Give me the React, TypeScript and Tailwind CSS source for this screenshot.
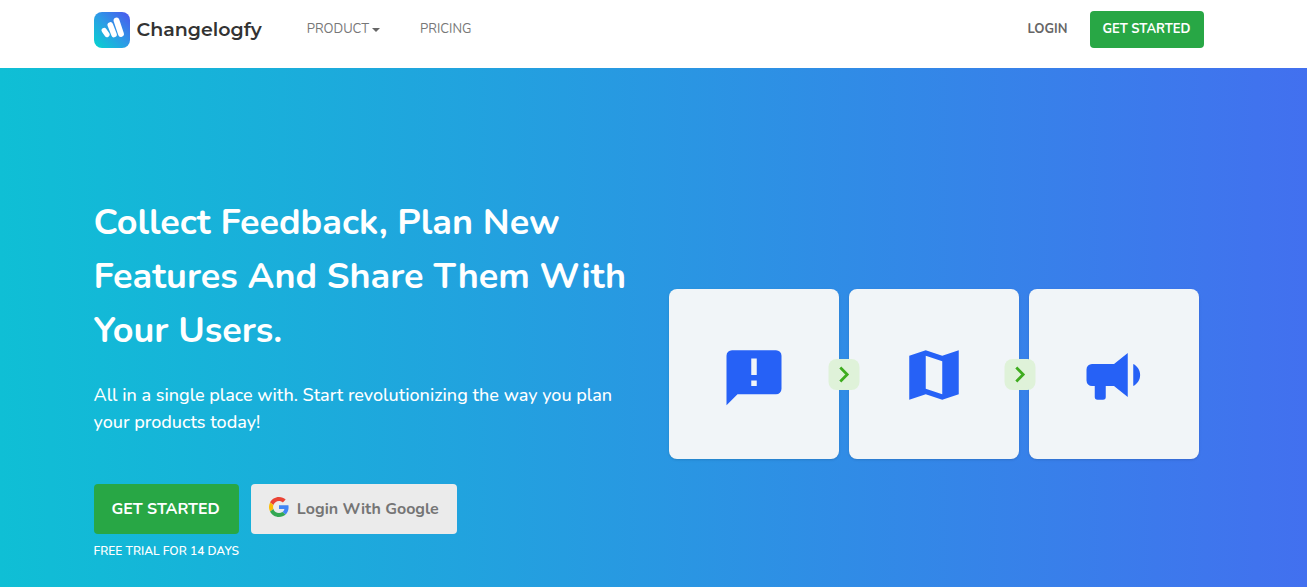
import React from 'react';

interface StepCardProps {
  label: string;
  viewBox: string;
  path: string;
}

const steps: StepCardProps[] = [
  {
    label: 'Feedback',
    viewBox: '0 -1 24 24',
    path: 'M13 11h-2V5h2v6zm0 4h-2v-2h2v2zM20 2H4a2 2 0 0 0-2 2v18l4-4h14a2 2 0 0 0 2-2V4a2 2 0 0 0-2-2z',
  },
  {
    label: 'Roadmap',
    viewBox: '0 0 24 24',
    path: 'M3 5l6-2 6 2 6-2v16l-6 2-6-2-6 2V5zm6 0v12l6 2V7L9 5z',
  },
  {
    label: 'Announcements',
    viewBox: '0 0 24 24',
    path: 'M12 8H4a2 2 0 0 0-2 2v4a2 2 0 0 0 2 2h1v4a1 1 0 0 0 1 1h2a1 1 0 0 0 1-1v-4h3l5 4V4l-5 4zm9.5 4c0 1.710-.96 3.260-2.500 4V8c1.530.75 2.500 2.300 2.500 4z',
  },
];

const StepCard = ({ label, viewBox, path }: StepCardProps) => (
  <div className="flex-1 aspect-square rounded-lg bg-[#f1f5f8] shadow-sm flex items-center justify-center pt-px">
    <svg className="w-[66px] h-[66px]" viewBox={viewBox} fill="#2661f6" fillRule="evenodd" role="img" aria-label={label}>
      <path d={path} />
    </svg>
  </div>
);

const Arrow = () => (
  <span className="w-[31px] h-[31px] rounded-lg bg-[#dff2d9] flex items-center justify-center">
    <svg className="w-[17px] h-[17px]" viewBox="0 0 16 16" fill="none" stroke="#3fac1f" strokeWidth="2.6" aria-hidden="true">
      <path d="M4.500 1.500L11 8 4.500 14.500" />
    </svg>
  </span>
);

const GoogleIcon = () => (
  <svg className="w-5 h-5 mb-1" viewBox="0 0 48 48" aria-hidden="true">
    <path fill="#EA4335" d="M24 9.5c3.540 0 6.710 1.220 9.210 3.600l6.850-6.850C35.900 2.380 30.470 0 24 0 14.620 0 6.510 5.380 2.560 13.220l7.980 6.190C12.430 13.720 17.740 9.5 24 9.5z" />
    <path fill="#4285F4" d="M46.980 24.550c0-1.570-.15-3.090-.38-4.550H24v9.020h12.940c-.58 2.960-2.260 5.480-4.780 7.180l7.730 6c4.510-4.180 7.090-10.360 7.090-17.650z" />
    <path fill="#FBBC05" d="M10.530 28.590c-.48-1.450-.76-2.990-.76-4.590s.27-3.140.76-4.590l-7.980-6.190C.92 16.460 0 20.120 0 24c0 3.880.92 7.540 2.560 10.780l7.970-6.190z" />
    <path fill="#34A853" d="M24 48c6.480 0 11.930-2.130 15.890-5.810l-7.730-6c-2.150 1.450-4.920 2.300-8.160 2.300-6.260 0-11.570-4.220-13.470-9.910l-7.980 6.190C6.510 42.620 14.620 48 24 48z" />
  </svg>
);

const Logo = () => (
  <a href="#" className="flex items-center gap-[7px]">
    <svg className="w-9 h-9" viewBox="0 0 36 36" aria-hidden="true">
      <defs>
        <linearGradient id="logo-bg" x1="0" y1="1" x2="1" y2="0">
          <stop offset="0" stopColor="#05d5cf" />
          <stop offset="0.5" stopColor="#2c9be6" />
          <stop offset="1" stopColor="#4d55ee" />
        </linearGradient>
      </defs>
      <rect width="36" height="36" rx="8" fill="url(#logo-bg)" />
      <g stroke="#fff" strokeLinecap="round" fill="none">
        <path d="M10.200 18.500L13 22.500" strokeWidth="5.200" />
        <path d="M16.300 13L20 22.500" strokeWidth="5.600" />
        <path d="M22.500 8.500L27 22" strokeWidth="5.800" />
      </g>
    </svg>
    <span className="font-['Montserrat','Inter',sans-serif] pt-px text-[19px] font-semibold text-[#333]">Changelogfy</span>
  </a>
);

const Header = () => (
  <header className="bg-white pr-[10px]">
    <div className="max-w-[1140px] mx-auto px-[15px] h-[68px] pb-[9px] flex items-center text-[13px]">
      <Logo />
      <nav className="ml-[45px] flex items-center gap-10 text-[#777]">
        <button type="button" className="flex items-center gap-[3px]">
          PRODUCT
          <span className="border-x-4 border-x-transparent border-t-4 border-t-[#666]" />
        </button>
        <a href="#">PRICING</a>
      </nav>
      <div className="ml-auto flex items-center gap-[22px] font-bold">
        <a href="#" className="text-[#666]">LOGIN</a>
        <a href="#" className="h-[37px] px-[13px] rounded bg-[#28a745] text-white flex items-center">GET STARTED</a>
      </div>
    </div>
  </header>
);

const Hero = () => (
  <main className="grow bg-linear-to-r/srgb from-[#0fbfd5] to-[#4270ef] text-white pr-[10px]">
    <div className="max-w-[1140px] mx-auto px-[15px] pt-32 pb-6 grid grid-cols-2 gap-[30px]">
      <div>
        <h1 className="text-[36px] leading-[54px] font-bold">
          Collect Feedback, Plan New Features And Share Them With Your Users.
        </h1>
        <p className="mt-6 text-lg leading-[27px] font-medium">
          All in a single place with. Start revolutionizing the way you plan your products today!
        </p>
        <div className="mt-12 flex items-start gap-3">
          <div className="text-center">
            <a href="#" className="h-[50px] px-[18px] rounded bg-[#28a745] font-bold flex items-center">GET STARTED</a>
            <small className="mt-2 block text-xs leading-[18px] font-semibold">FREE TRIAL FOR 14 DAYS</small>
          </div>
          <button type="button" className="h-[50px] px-[18px] rounded bg-[#ebebeb] text-[#757575] font-bold flex items-center gap-2">
            <GoogleIcon />
            Login With Google
          </button>
        </div>
      </div>

      <div className="pt-[93px]">
        <div className="relative px-[5px] flex gap-[10px]">
          {steps.map((step) => (
            <StepCard key={step.label} {...step} />
          ))}
          {/* Arrows lie over the gaps between the cards */}
          <div className="absolute inset-y-0 left-1/3 -translate-x-1/2 flex items-center">
            <Arrow />
          </div>
          <div className="absolute inset-y-0 left-[66%] -translate-x-1/2 flex items-center">
            <Arrow />
          </div>
        </div>
      </div>
    </div>
  </main>
);

const App = () => (
  <div className="min-h-screen flex flex-col font-['Nunito','Open_Sans',sans-serif]">
    <Header />
    <Hero />
  </div>
);

export default App;
